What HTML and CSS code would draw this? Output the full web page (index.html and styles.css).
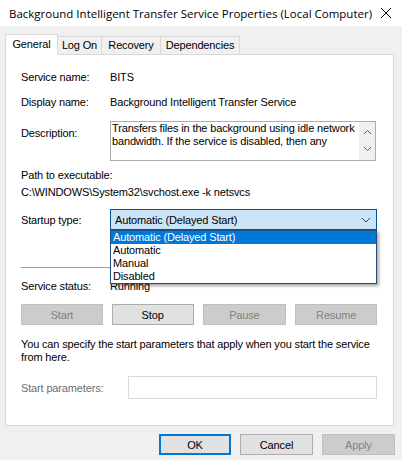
FILE: index.html
```html
<!DOCTYPE html>
<html lang="en">
<head>
    <meta charset="UTF-8">
    <title>Background Intelligent Transfer Service Properties (Local Computer)</title>
    <link rel="stylesheet" href="styles.css">
</head>
<body>

    <!-- Title bar -->
    <div class="titlebar">
        <span class="title">Background Intelligent Transfer Service Properties (Local Computer)</span>
        <svg class="close" width="12" height="12" viewBox="0 0 12 12">
            <path d="M1 1 L11 11 M11 1 L1 11" stroke="#000" stroke-width="1" fill="none"/>
        </svg>
    </div>

    <!-- Tabs -->
    <div class="tabs">
        <div class="tab active">General</div>
        <div class="tab t-logon">Log On</div>
        <div class="tab t-recovery">Recovery</div>
        <div class="tab t-deps">Dependencies</div>
    </div>

    <!-- General page -->
    <div class="panel">
        <div class="row r-name">
            <span class="label">Service name:</span>
            <span>BITS</span>
        </div>
        <div class="row r-display">
            <span class="label">Display name:</span>
            <span>Background Intelligent Transfer Service</span>
        </div>
        <div class="row r-desc">
            <span class="label desc-label">Description:</span>
            <div class="desc-box">
                <div class="desc-text">Transfers files in the background using idle network<br>bandwidth. If the service is disabled, then any</div>
                <div class="scroll">
                    <svg width="9" height="6" viewBox="0 0 9 6"><path d="M1 5 L4.5 1.5 L8 5" stroke="#606060" fill="none"/></svg>
                    <svg width="9" height="6" viewBox="0 0 9 6"><path d="M1 1 L4.5 4.5 L8 1" stroke="#606060" fill="none"/></svg>
                </div>
            </div>
        </div>
        <div class="path-label">Path to executable:</div>
        <div class="path-value">C:\WINDOWS\System32\svchost.exe -k netsvcs</div>
        <div class="row r-startup">
            <span class="label">Startup type:</span>
            <div class="combo-wrap">
                <div class="combo">
                    <span>Automatic (Delayed Start)</span>
                    <svg width="10" height="6" viewBox="0 0 10 6"><path d="M1 1 L5 5 L9 1" stroke="#404040" fill="none"/></svg>
                </div>
                <div class="dropdown">
                    <div class="item selected">Automatic (Delayed Start)</div>
                    <div class="item">Automatic</div>
                    <div class="item">Manual</div>
                    <div class="item">Disabled</div>
                </div>
            </div>
        </div>
        <div class="separator"></div>
        <div class="row r-status">
            <span class="label">Service status:</span>
            <span>Running</span>
        </div>
        <div class="buttons">
            <button class="btn disabled">Start</button>
            <button class="btn">Stop</button>
            <button class="btn disabled">Pause</button>
            <button class="btn disabled">Resume</button>
        </div>
        <p class="hint">You can specify the start parameters that apply when you start the service<br>from here.</p>
        <div class="row r-params">
            <span class="label params-label">Start parameters:</span>
            <div class="params-box"></div>
        </div>
    </div>

    <!-- Dialog buttons -->
    <div class="footer">
        <button class="btn dlg default">OK</button>
        <button class="btn dlg">Cancel</button>
        <button class="btn dlg disabled">Apply</button>
    </div>

</body>
</html>
```

FILE: styles.css
```css
* {
    margin: 0;
    padding: 0;
    box-sizing: border-box;
}

body {
    width: 402px;
    height: 460px;
    background-color: #f0f0f0;
    font-family: "Liberation Sans", Arial, sans-serif;
    font-size: 11px;
    letter-spacing: -0.15px;
    color: #000;
    overflow: hidden;
}

/* Title bar */
.titlebar {
    height: 26px;
    background-color: #fff;
    display: flex;
    align-items: center;
    justify-content: space-between;
    padding: 0 10px 0 9px;
}

.title {
    font-family: "Open Sans", "Noto Sans", sans-serif;
    font-size: 11.5px;
    letter-spacing: 0;
    white-space: nowrap;
}

/* Tabs */
.tabs {
    display: flex;
    align-items: flex-end;
    height: 28px;
    padding-left: 5px;
}

.tab {
    height: 18px;
    line-height: 16px;
    text-align: center;
    border: 1px solid #d9d9d9;
    border-bottom: none;
    border-left: none;
    background-color: #f0f0f0;
}

.tab.active {
    width: 53px;
    height: 21px;
    line-height: 18px;
    background-color: #fff;
    border-left: 1px solid #d9d9d9;
    margin-bottom: -1px;
    margin-right: -1px;
    position: relative;
    z-index: 1;
}

.t-logon {
    width: 45px;
    border-left: 1px solid #d9d9d9;
}

.t-recovery {
    width: 59px;
}

.t-deps {
    width: 79px;
}

/* Panel */
.panel {
    margin-left: 5px;
    width: 389px;
    height: 372px;
    background-color: #fff;
    border: 1px solid #d9d9d9;
    padding: 15px 16px 0 15px;
}

.row {
    display: flex;
    align-items: flex-start;
    line-height: 14px;
}

.label {
    width: 89px;
    flex-shrink: 0;
}

.r-display {
    margin-top: 11px;
}

.r-desc {
    margin-top: 12px;
}

.desc-label {
    padding-top: 5px;
}

.desc-box {
    width: 266px;
    height: 40px;
    border: 1px solid #abadb3;
    display: flex;
}

.desc-text {
    flex: 1;
    padding-left: 1px;
    line-height: 13px;
    white-space: nowrap;
    overflow: hidden;
}

.scroll {
    width: 16px;
    background-color: #f0f0f0;
    display: flex;
    flex-direction: column;
    align-items: center;
    justify-content: space-between;
    padding: 7px 0 8px;
}

.path-label {
    margin-top: 7px;
    line-height: 14px;
}

.path-value {
    margin-top: 3px;
    line-height: 14px;
}

.r-startup {
    margin-top: 10px;
    align-items: center;
}

.combo-wrap {
    position: relative;
}

.combo {
    width: 267px;
    height: 21px;
    background-color: #cce4f7;
    border: 1px solid #005499;
    display: flex;
    align-items: center;
    justify-content: space-between;
    padding: 0 5px 0 4px;
}

/* Open list lies over the rows below */
.dropdown {
    position: absolute;
    top: 21px;
    left: 0;
    width: 267px;
    background-color: #fff;
    border: 1px solid #1e4f7e;
    box-shadow: 2px 2px 3px rgba(0, 0, 0, 0.35);
    z-index: 5;
}

.item {
    height: 13px;
    line-height: 13px;
    padding-left: 2px;
}

.item.selected {
    background-color: #0078d7;
    color: #fff;
}

.separator {
    margin-top: 37px;
    height: 1px;
    background-color: #a0a0a0;
    width: 356px;
}

.r-status {
    margin-top: 11px;
}

/* Buttons */
.buttons {
    margin-top: 11px;
    display: flex;
    gap: 9px;
}

.btn {
    height: 21px;
    font-family: "Liberation Sans", Arial, sans-serif;
    font-size: 11px;
    letter-spacing: -0.15px;
    background-color: #e1e1e1;
    border: 1px solid #adadad;
    color: #000;
}

.buttons .btn {
    width: 82px;
}

.buttons .btn:nth-child(3) {
    width: 84px;
}

.btn.disabled {
    background-color: #cccccc;
    border-color: #bfbfbf;
    color: #838383;
}

.hint {
    margin-top: 13px;
    line-height: 13px;
    white-space: nowrap;
}

.r-params {
    margin-top: 12px;
    align-items: center;
}

.params-label {
    width: 107px;
    color: #6d6d6d;
}

.params-box {
    width: 249px;
    height: 23px;
    border: 1px solid #d9d9d9;
    background-color: #fff;
}

/* Dialog footer */
.footer {
    display: flex;
    justify-content: flex-end;
    gap: 9px;
    padding: 8px 7px 0 0;
}

.btn.dlg {
    width: 73px;
}

.btn.default {
    border: 2px solid #0078d7;
    width: 72px;
}
```
